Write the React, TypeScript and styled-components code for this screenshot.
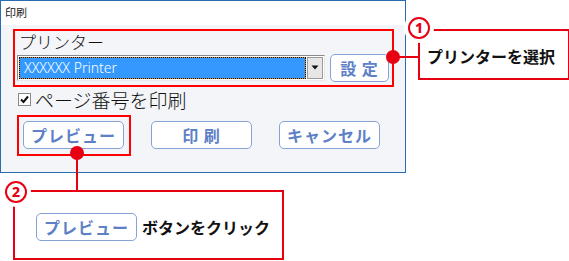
import React from 'react';
import styled, { createGlobalStyle } from 'styled-components';

const Global = createGlobalStyle`
  html, body { margin: 0; padding: 0; background: #fff; }
  body { font-family: "Noto Sans CJK JP", "Noto Sans", sans-serif; }
`;

const RED = '#e60012';
const JP = `"Noto Sans CJK JP", "Noto Sans", sans-serif`;

const Canvas = styled.div`
  position: relative;
  width: 569px;
  height: 261px;
  overflow: hidden;
  background: #fff;
`;

const Window = styled.div`
  width: 406px;
  height: 173px;
  box-sizing: border-box;
  border: 1px solid #2a6cb3;
  display: flex;
  flex-direction: column;
`;

const TitleBar = styled.div`
  height: 24px;
  flex: none;
  background: #fff;
  padding-left: 4px;
  font-family: ${JP};
  font-size: 11px;
  line-height: 22px;
  color: #222;
`;

const Body = styled.div`
  flex: 1;
  background: #f3f5f8;
  padding: 6px 0 0 16px;
  display: flex;
  flex-direction: column;
`;

const Label = styled.div`
  font-family: ${JP};
  font-size: 17px;
  font-weight: 300;
  line-height: 22px;
  height: 22px;
  padding-left: 2px;
  color: #111;
`;

const SelectRow = styled.div`
  display: flex;
  align-items: center;
  gap: 5px;
  height: 29px;
`;

const Select = styled.div`
  width: 308px;
  height: 26px;
  box-sizing: border-box;
  border: 1px solid;
  border-color: #8a8a8a #e8e8e8 #e8e8e8 #8a8a8a;
  background: #fff;
  padding: 1px;
  display: flex;
  gap: 1px;
`;

const Selected = styled.div`
  flex: 1;
  background: #c98a3e;
  display: flex;
`;

const SelectedInner = styled.div`
  flex: 1;
  border: 1px dotted #111;
  background: #3399ff;
  background-clip: padding-box;
  color: #fff;
  font-family: "Noto Sans", sans-serif;
  font-size: 14px;
  font-weight: 300;
  line-height: 20px;
  padding-left: 4px;
  white-space: nowrap;
`;

const Arrow = styled.div`
  width: 16px;
  box-sizing: border-box;
  background: #e6e6e6;
  border: 1px solid #9a9a9a;
  display: flex;
  align-items: center;
  justify-content: center;
`;

const Btn = styled.button<{ $w?: number }>`
  width: ${(p) => p.$w ?? 101}px;
  height: 28px;
  flex: none;
  box-sizing: border-box;
  border: 1px solid #86a3d6;
  border-radius: 5px;
  background: #fff;
  color: #5d80c6;
  font-family: ${JP};
  font-weight: 700;
  font-size: 16px;
  letter-spacing: 1px;
  padding: 0;
  line-height: 26px;
  white-space: pre;
`;

const CheckRow = styled.div`
  margin-top: 5px;
  height: 24px;
  display: flex;
  align-items: center;
  gap: 4px;
  padding-left: 1px;
  font-family: ${JP};
  font-size: 19px;
  font-weight: 300;
  color: #111;
`;

const Box = styled.span`
  width: 13px;
  height: 13px;
  box-sizing: border-box;
  border: 1px solid #8a8a8a;
  background: #fff;
  display: flex;
  align-items: center;
  justify-content: center;
`;

const ButtonRow = styled.div`
  margin-top: 10px;
  padding-left: 6px;
  display: flex;
  gap: 27px;
`;

/* annotations */
const Frame = styled.div<{ $l: number; $t: number; $w: number; $h: number }>`
  position: absolute;
  left: ${(p) => p.$l}px;
  top: ${(p) => p.$t}px;
  width: ${(p) => p.$w}px;
  height: ${(p) => p.$h}px;
  box-sizing: border-box;
  border: 2px solid #ff0000;
`;

const Dot = styled.div<{ $x: number; $y: number }>`
  position: absolute;
  left: ${(p) => p.$x - 7}px;
  top: ${(p) => p.$y - 7}px;
  width: 14px;
  height: 14px;
  border-radius: 50%;
  background: ${RED};
`;

const HLine = styled.div<{ $l: number; $t: number; $w: number }>`
  position: absolute;
  left: ${(p) => p.$l}px;
  top: ${(p) => p.$t}px;
  width: ${(p) => p.$w}px;
  height: 2px;
  background: ${RED};
`;

const VLine = styled.div<{ $l: number; $t: number; $h: number }>`
  position: absolute;
  left: ${(p) => p.$l}px;
  top: ${(p) => p.$t}px;
  width: 2px;
  height: ${(p) => p.$h}px;
  background: ${RED};
`;

const Callout = styled.div<{ $l: number; $t: number; $w: number; $h: number; $pl: number }>`
  position: absolute;
  left: ${(p) => p.$l}px;
  top: ${(p) => p.$t}px;
  width: ${(p) => p.$w}px;
  height: ${(p) => p.$h}px;
  box-sizing: border-box;
  border: 2px solid ${RED};
  padding: 3px 0 0 ${(p) => p.$pl}px;
  display: flex;
  align-items: center;
  gap: 5px;
  font-family: ${JP};
  font-weight: 700;
  font-size: 16px;
  color: #111;
  white-space: nowrap;
`;

const Badge = styled.div<{ $x: number; $y: number }>`
  position: absolute;
  left: ${(p) => p.$x - 11}px;
  top: ${(p) => p.$y - 11}px;
  width: 22px;
  height: 22px;
  box-sizing: border-box;
  border-radius: 50%;
  border: 2.5px solid ${RED};
  background: #fff;
  box-shadow: 0 0 0 4px #fff;
  color: ${RED};
  font-family: "Noto Sans", sans-serif;
  font-weight: 800;
  font-size: 14px;
  line-height: 17px;
  text-align: center;
`;

export default function App() {
  return (
    <Canvas>
      <Global />
      <Window>
        <TitleBar>印刷</TitleBar>
        <Body>
          <Label>プリンター</Label>
          <SelectRow>
            <Select>
              <Selected>
                <SelectedInner>XXXXXX Printer</SelectedInner>
              </Selected>
              <Arrow>
                <svg width="8" height="5" viewBox="0 0 8 5">
                  <path d="M0.5 0.5 H7.5 L4 4.5 Z" fill="#111" />
                </svg>
              </Arrow>
            </Select>
            <Btn $w={59}>{'設 定'}</Btn>
          </SelectRow>
          <CheckRow>
            <Box>
              <svg width="9" height="9" viewBox="0 0 9 9">
                <path d="M1 4.5 L3.5 7 L8 1.5" stroke="#111" strokeWidth="2" fill="none" />
              </svg>
            </Box>
            <span>ページ番号を印刷</span>
          </CheckRow>
          <ButtonRow>
            <Btn>プレビュー</Btn>
            <Btn>{'印 刷'}</Btn>
            <Btn>キャンセル</Btn>
          </ButtonRow>
        </Body>
      </Window>

      <Frame $l={13} $t={29} $w={381} $h={58} />
      <Frame $l={17} $t={115} $w={114} $h={41} />

      <HLine $l={393} $t={56} $w={27} />
      <VLine $l={76} $t={153} $h={39} />
      <Dot $x={393} $y={57} />
      <Dot $x={77} $y={153} />

      <Callout $l={418} $t={29} $w={152} $h={51} $pl={7}>
        プリンターを選択
      </Callout>
      <Badge $x={419} $y={28}>1</Badge>

      <Callout $l={13} $t={190} $w={271} $h={70} $pl={21}>
        <Btn>プレビュー</Btn>
        <span>ボタンをクリック</span>
      </Callout>
      <Badge $x={16} $y={192}>2</Badge>
    </Canvas>
  );
}
